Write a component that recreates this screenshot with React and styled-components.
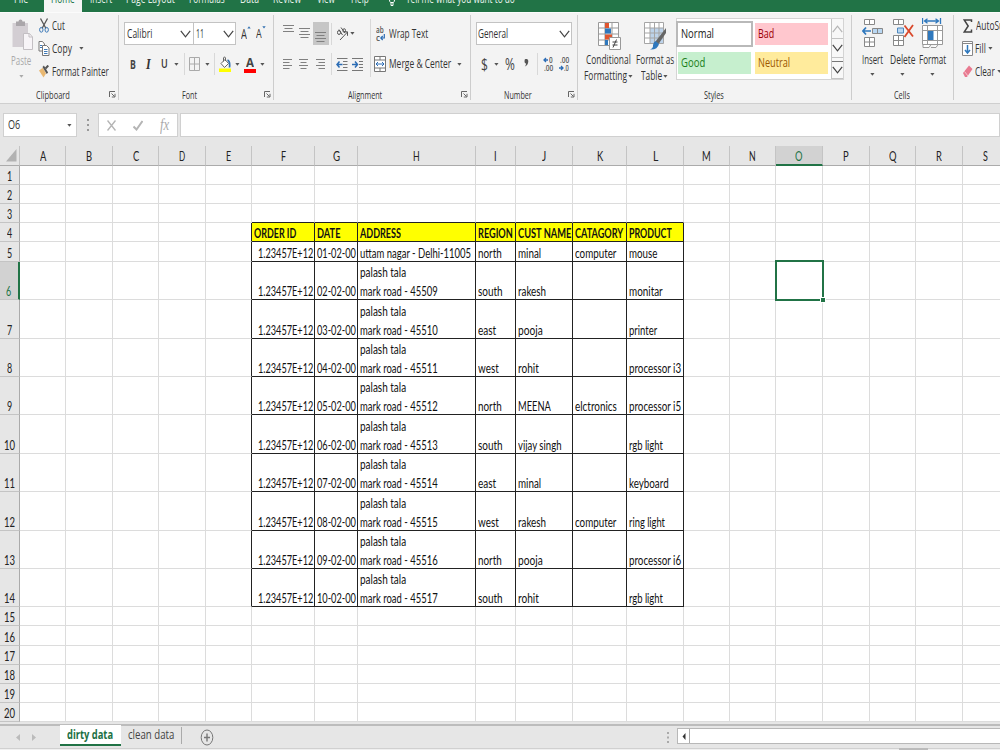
import { useLayoutEffect, useRef, useState } from "react"
import styled, { createGlobalStyle } from "styled-components"

const columns = [
    { name: "A", width: 46, letter: 6 },
    { name: "B", width: 47, letter: 6 },
    { name: "C", width: 46, letter: 6 },
    { name: "D", width: 47, letter: 6.5 },
    { name: "E", width: 46, letter: 5 },
    { name: "F", width: 63, letter: 5 },
    { name: "G", width: 43, letter: 7 },
    { name: "H", width: 118, letter: 7 },
    { name: "I", width: 40, letter: 3 },
    { name: "J", width: 57, letter: 4 },
    { name: "K", width: 54, letter: 6 },
    { name: "L", width: 57, letter: 5 },
    { name: "M", width: 46, letter: 9 },
    { name: "N", width: 46, letter: 7 },
    { name: "O", width: 47, letter: 7.5 },
    { name: "P", width: 47, letter: 6 },
    { name: "Q", width: 46, letter: 7.5 },
    { name: "R", width: 47, letter: 6 },
    { name: "S", width: 46, letter: 5 },
]

const rowHeights = [19, 19, 19, 19, 20, 38, 39, 38, 38, 39, 38, 39, 38, 38, 19, 20, 19, 19, 19, 19]

const fields = ["F", "G", "H", "I", "J", "K", "L"]

// every text is stored with the width it takes up in the sheet
const titles = [
    ["ORDER ID", 42],
    ["DATE", 23.5],
    ["ADDRESS", 41],
    ["REGION", 34.5],
    ["CUST NAME", 53.5],
    ["CATAGORY", 48.5],
    ["PRODUCT", 43],
]

const textWidths = {
    north: 23.5,
    south: 24.5,
    east: 18.5,
    west: 20.5,
    minal: 23.5,
    rakesh: 28,
    pooja: 25,
    rohit: 21,
    MEENA: 33,
    "vijay singh": 43.5,
    computer: 41.5,
    elctronics: 42,
    mouse: 28.5,
    monitar: 33.5,
    printer: 28.5,
    "processor i3": 52,
    "processor i5": 52,
    "processor i6": 52,
    "rgb light": 34,
    keyboard: 40,
    "ring light": 36,
}

const orders = [
    { date: "01-02-00", address: "uttam nagar - Delhi-11005", rest: ["north", "minal", "computer", "mouse"] },
    { date: "02-02-00", address: "mark road - 45509", rest: ["south", "rakesh", "", "monitar"] },
    { date: "03-02-00", address: "mark road - 45510", rest: ["east", "pooja", "", "printer"] },
    { date: "04-02-00", address: "mark road - 45511", rest: ["west", "rohit", "", "processor i3"] },
    { date: "05-02-00", address: "mark road - 45512", rest: ["north", "MEENA", "elctronics", "processor i5"] },
    { date: "06-02-00", address: "mark road - 45513", rest: ["south", "vijay singh", "", "rgb light"] },
    { date: "07-02-00", address: "mark road - 45514", rest: ["east", "minal", "", "keyboard"] },
    { date: "08-02-00", address: "mark road - 45515", rest: ["west", "rakesh", "computer", "ring light"] },
    { date: "09-02-00", address: "mark road - 45516", rest: ["north", "pooja", "", "processor i6"] },
    { date: "10-02-00", address: "mark road - 45517", rest: ["south", "rohit", "", "rgb light"] },
]

// condensed text: scales the words to the given width
function Text({ w, ml, children, className }) {
    const ref = useRef(null)
    const [scale, setScale] = useState(1)

    useLayoutEffect(() => {
        setScale(w / ref.current.offsetWidth)
    }, [w, children])

    return (
        <TextBox $w={w} $ml={ml} className={className}>
            <span ref={ref} style={{ transform: `scaleX(${scale})` }}>
                {children}
            </span>
        </TextBox>
    )
}

function Caret({ ml, mt, color = "#555" }) {
    return (
        <Icon $ml={ml} $mt={mt} width="5" height="3" viewBox="0 0 5 3">
            <path d="M0.3 0h4.2L2.4 2.8z" fill={color} />
        </Icon>
    )
}

function Chevron({ ml, color = "#444", w = 11 }) {
    return (
        <Icon $ml={ml} width={w} height="8" viewBox="0 0 11 8" fill="none" stroke={color} strokeWidth="1.2">
            <path d="M.8 .8l4.7 6 4.7-6" />
        </Icon>
    )
}

function Lines({ ml, mt = 0, rows, w = 11 }) {
    return (
        <Icon $ml={ml} $mt={mt} width={w} height={rows.length * 3} stroke="#808080" strokeWidth="1">
            {rows.map(([x1, x2], i) => (
                <path key={i} d={`M${x1} ${i * 3 + 0.5}H${x2}`} />
            ))}
        </Icon>
    )
}

function Launcher() {
    return (
        <LauncherIcon width="7" height="7" fill="none" stroke="#666">
            <path d="M.5 6V.5H6M2.5 2.5l3 3M6 2.8V6H2.8" />
        </LauncherIcon>
    )
}

function Clipboard() {
    return (
        <Group $w={119}>
            <Body>
                <Stack $w={36} $pl={11} $pt={6}>
                    <Icon width="22" height="32" viewBox="0 0 22 32">
                        <path d="M1.5 4H17v24H1.5z" fill="#d3ced3" />
                        <path d="M5 2.5h2.5a2 2 0 0 1 4 0H14V7H5z" fill="#aaa6aa" />
                        <path d="M12.5 14.5h6l3 3.5v12.5h-9z" fill="#f7f4f7" stroke="#c3bfc3" />
                        <path d="M18 14.5V18h3.5" fill="none" stroke="#c3bfc3" />
                    </Icon>
                    <PaleText w={20}>Paste</PaleText>
                    <Caret ml={8} mt={6} color="#aaa" />
                </Stack>
                <Stack $pt={1}>
                    <Tool $h={23}>
                        <Icon $ml={3} width="10" height="15" fill="none">
                            <path d="M1.5 .5L7 10.5M8.5 .5L3 10.5" stroke="#555" strokeWidth="1.3" />
                            <ellipse cx="2.3" cy="11.8" rx="1.7" ry="2.4" stroke="#3d7ab8" />
                            <ellipse cx="7.7" cy="11.8" rx="1.7" ry="2.4" stroke="#3d7ab8" />
                        </Icon>
                        <Text w={13} ml={3}>Cut</Text>
                    </Tool>
                    <Tool $h={23}>
                        <Icon $ml={2} width="12" height="15" stroke="#777" fill="#fff">
                            <path d="M1 .5h3.5L6.5 3v7H1z" />
                            <path d="M4.500 4.500h4L11 7v7.500H4.500z" />
                            <path d="M2 4.500h2M2 6.500h2M6 8.500h3.500M6 10.500h3.500M6 12.500h3.500" stroke="#3d7ab8" />
                        </Icon>
                        <Text w={20} ml={2}>Copy</Text>
                        <Caret ml={7} />
                    </Tool>
                    <Tool $h={23}>
                        <Icon $ml={3} width="11" height="13">
                            <path d="M0 5.500L3.800 2.800 7 8.500 4.500 12.500z" fill="#e9b872" />
                            <path d="M3.500 2l1.400-1.500 4.200 7L7.700 9z" fill="#555" />
                            <path d="M6.500 3.500L9.300 .5" stroke="#555" strokeWidth="2" />
                        </Icon>
                        <Text w={57} ml={2}>Format Painter</Text>
                    </Tool>
                </Stack>
            </Body>
            <Caption $pl={36}>
                <Text w={34}>Clipboard</Text>
                <Launcher />
            </Caption>
        </Group>
    )
}

function Font() {
    return (
        <Group $w={155}>
            <Stack $pt={9}>
                <Tool $h={23}>
                    <Select $ml={5} $w={70}>
                        <Text w={25} ml={2}>Calibri</Text>
                        <Chevron ml={28} />
                    </Select>
                    <Select $w={42} $joined>
                        <Text w={8} ml={2}>11</Text>
                        <Chevron ml={19} />
                    </Select>
                    <TallText w={6} ml={5}>A</TallText>
                    <Icon $mt={-12} width="4" height="3"><path d="M.3 2.500L2 .3l1.700 2.200z" fill="#3270b0" /></Icon>
                    <SmallText w={6} ml={5}>A</SmallText>
                    <Icon $mt={-12} width="4" height="3"><path d="M.3 .3L2 2.500 3.700 .3z" fill="#3270b0" /></Icon>
                </Tool>
                <Tool $h={22} $mt={8}>
                    <BoldText w={6} ml={10.5}>B</BoldText>
                    <ItalicText w={5} ml={10.5}>I</ItalicText>
                    <UnderText w={6.5} ml={10}>U</UnderText>
                    <Caret ml={6.5} />
                    <Rule $ml={5} />
                    <Icon $ml={4} width="11" height="14" fill="none" stroke="#aaa">
                        <path d="M.5 .5h10v13H.5zM5.500 .5v13M.5 7h10" />
                    </Icon>
                    <Caret ml={5} />
                    <Rule $ml={4} />
                    <Icon $ml={4} width="12" height="16" fill="none">
                        <path d="M2 7.500l4-4 3.500 4-4 4z" fill="#fff" stroke="#666" />
                        <path d="M4.500 5.500V2q1-2.500 2 0v3" stroke="#666" />
                        <path d="M8.500 4q2.800 1 2 7.500" stroke="#3270b0" strokeWidth="1.700" />
                        <path d="M0 12.500h12V16H0z" fill="#ff0" />
                    </Icon>
                    <Caret ml={4} />
                    <ColorLetter>
                        <BoldText w={8}>A</BoldText>
                    </ColorLetter>
                    <Caret ml={4} />
                </Tool>
            </Stack>
            <Caption $pl={63}>
                <Text w={15}>Font</Text>
                <Launcher />
            </Caption>
        </Group>
    )
}

function Alignment() {
    const left = [[0, 9], [0, 6.5], [0, 9], [0, 6.5]]
    const center = [[0, 9], [1.5, 7.5], [0, 9], [1.5, 7.5]]
    const right = [[0, 9], [2.5, 9], [0, 9], [2.5, 9]]
    const bars = [[0, 11], [1.5, 9.5], [0, 11]]

    return (
        <Group $w={197}>
            <Body>
                <TallStack>
                    <Tool $h={23}>
                        <Lines ml={9} mt={-9} rows={bars} />
                        <Lines ml={5} rows={[...bars, [1.5, 9.5]]} />
                        <Pressed>
                            <Lines mt={8} rows={[...bars, [1.5, 9.5]]} />
                        </Pressed>
                        <Rule $ml={2} />
                        <Icon $ml={4} width="13" height="14" fill="none" stroke="#555">
                            <path d="M4 13L11.500 5M8 4.800h3.500v4" />
                            <ellipse cx="3" cy="5.500" rx="1.500" ry="2" />
                            <path d="M3 2.500L6.500 8M5 .5L9 6" />
                            <ellipse cx="8.200" cy="3.500" rx="1.300" ry="1.800" />
                        </Icon>
                        <Caret ml={1} />
                    </Tool>
                    <Tool $h={22} $mt={8}>
                        <Lines ml={9} mt={2} rows={left} w={9} />
                        <Lines ml={7} mt={2} rows={center} w={9} />
                        <Lines ml={8} mt={2} rows={right} w={9} />
                        <Rule $ml={6} />
                        <Icon $ml={4} width="12" height="13" fill="none" stroke="#777">
                            <path d="M1 .5h10.500M7 3.500h4.500M7 6.500h4.500M7 9.500h4.500M1 12.500h10.500" />
                            <path d="M6.500 6.500H1M3.500 3.500l-2.500 3 2.500 3" stroke="#2b6cb5" strokeWidth="1.500" />
                        </Icon>
                        <Icon $ml={4} width="12" height="13" fill="none" stroke="#777">
                            <path d="M0 .5h11M7 3.500h4M7 6.500h4M7 9.500h4M0 12.500h11" />
                            <path d="M0 6.500h5.500M3 3.500l2.500 3-2.500 3" stroke="#2b6cb5" strokeWidth="1.500" />
                        </Icon>
                    </Tool>
                </TallStack>
                <Stack $pt={9}>
                    <Tool $h={23}>
                        <WrapIcon>
                            <TinyText w={8}>ab</TinyText>
                            <TinyText w={4}>c</TinyText>
                            <Icon width="5" height="7" fill="none" stroke="#2b6cb5" strokeWidth="1.200">
                                <path d="M4.300 0v4H1M2.700 2L.8 4l1.900 2" />
                            </Icon>
                        </WrapIcon>
                        <Text w={39} ml={2}>Wrap Text</Text>
                    </Tool>
                    <Tool $h={22} $mt={8}>
                        <Icon $ml={3} width="12" height="16" fill="#fff" stroke="#777">
                            <path d="M.5 .5h11v15H.5zM.5 4h11M.5 12h11M6 .5V4M6 12v3.500" />
                            <path d="M2 8h8M4 6L2 8l2 2M8 6l2 2-2 2" stroke="#2b6cb5" fill="none" />
                        </Icon>
                        <Text w={62} ml={2.5}>Merge &amp; Center</Text>
                        <Caret ml={6.5} />
                    </Tool>
                </Stack>
            </Body>
            <Caption $pl={74}>
                <Text w={34}>Alignment</Text>
                <Launcher />
            </Caption>
        </Group>
    )
}

function NumberGroup() {
    return (
        <Group $w={107}>
            <Stack $pt={9}>
                <Tool $h={23}>
                    <Select $ml={5} $w={96}>
                        <Text w={30} ml={1}>General</Text>
                        <Chevron ml={51} />
                    </Select>
                </Tool>
                <Tool $h={22} $mt={8}>
                    <LargeText w={7} ml={10}>$</LargeText>
                    <Caret ml={6} />
                    <LargeText w={10} ml={5.5}>%</LargeText>
                    <Icon $ml={9} $mt={-2} width="5" height="9">
                        <path d="M1.500 0h1.300q1.700 0 1.500 2.500Q4 6.500 .8 7.500q1.400-1.700 1.200-3Q.5 4.500 .5 2.300 .5 0 1.500 0z" fill="#555" />
                    </Icon>
                    <Rule $ml={8} />
                    <Decimals>
                        <Tool>
                            <Icon width="5" height="6" fill="none" stroke="#2b6cb5" strokeWidth="1.300"><path d="M5 3H1M3 1L1 3l2 2" /></Icon>
                            <TinyText w={4} ml={1}>0</TinyText>
                        </Tool>
                        <Tool><TinyText w={9} ml={1}>.00</TinyText></Tool>
                    </Decimals>
                    <Decimals>
                        <Tool><TinyText w={9} ml={1}>.00</TinyText></Tool>
                        <Tool>
                            <Icon width="5" height="6" fill="none" stroke="#2b6cb5" strokeWidth="1.300"><path d="M0 3h4M2 1l2 2-2 2" /></Icon>
                            <TinyText w={5}>.0</TinyText>
                        </Tool>
                    </Decimals>
                </Tool>
            </Stack>
            <Caption $pl={33}>
                <Text w={28}>Number</Text>
                <Launcher />
            </Caption>
        </Group>
    )
}

function Styles() {
    return (
        <Group $w={274}>
            <Body>
                <Stack $w={57} $pt={9} $pl={6}>
                    <Icon $ml={14} width="23" height="28">
                        <path d="M.5 .5h20v23H.5zM7 .5v23M14 .5v23M.5 6h20M.5 12h20M.5 18h20" fill="#fff" stroke="#999" />
                        <path d="M7 1h4v5H7zM7 12.500h7v5H7z" fill="#e0562f" />
                        <path d="M7 6.500h6v5H7zM7 18h3v5H7z" fill="#2f78bd" />
                        <path d="M11.500 15.500h11v12h-11z" fill="#fff" stroke="#999" />
                        <path d="M14.500 20h5M14.500 23h5M18.500 17.500l-3.500 8" stroke="#444" />
                    </Icon>
                    <BigLabel w={45} ml={2}>Conditional</BigLabel>
                    <Tool>
                        <Text w={43}>Formatting</Text>
                        <Caret ml={1} />
                    </Tool>
                </Stack>
                <Stack $w={41} $pt={9}>
                    <Icon $ml={9} width="23" height="28">
                        <path d="M.5 .5h19v21H.5z" fill="#fff" />
                        <path d="M6 6h14v15.500H6z" fill="#bdd3ea" />
                        <path d="M.5 .5h19v21H.5zM6 .5v21M10.500 .5v21M15 .5v21M.5 6h19M.5 11h19M.5 16h19" fill="none" stroke="#a5a5a5" />
                        <path d="M22 6v5l-7.500 11-3-2.500z" fill="#666" />
                        <path d="M11.500 19l3.500 3q-1.500 6-9 5.500 3.500-1.500 3-4.500 .5-3 2.500-4z" fill="#2f78bd" />
                    </Icon>
                    <BigLabel w={38} ml={0.5}>Format as</BigLabel>
                    <Tool>
                        <Text w={21} ml={6}>Table</Text>
                        <Caret ml={1} />
                    </Tool>
                </Stack>
                <Gallery>
                    <Swatches>
                        <Swatch $active><Text w={33} ml={3}>Normal</Text></Swatch>
                        <Swatch $bg="#ffc7ce" $color="#9c0006"><Text w={16} ml={3}>Bad</Text></Swatch>
                        <Swatch $bg="#c6efce" $color="#1a7f1a"><Text w={24} ml={3}>Good</Text></Swatch>
                        <Swatch $bg="#ffeb9c" $color="#9c5700"><Text w={32} ml={3}>Neutral</Text></Swatch>
                    </Swatches>
                    <Scroller>
                        <ScrollButton $flip><Chevron color="#b5b5b5" /></ScrollButton>
                        <ScrollButton><Chevron /></ScrollButton>
                        <ScrollButton $more><Chevron /></ScrollButton>
                    </Scroller>
                </Gallery>
            </Body>
            <Caption $pl={126}>
                <Text w={20}>Styles</Text>
            </Caption>
        </Group>
    )
}

function Cells() {
    return (
        <Group $w={102}>
            <Body>
                <Stack $w={38} $pt={6} $pl={10}>
                    <Icon width="22" height="31" fill="#fff" stroke="#888">
                        <path d="M2.500 .5h10v5h-10zM7.500 .5v5M2.500 18.500h10v9h-10zM7.500 18.500v9M2.500 23h10" />
                        <path d="M10.500 9.500h10v5h-10zM15.500 9.500v5" fill="#b9d7f2" />
                        <path d="M9 12H1M4 8.500L1 12l3 3.500" fill="none" stroke="#2f78bd" strokeWidth="1.700" />
                    </Icon>
                    <BigLabel w={21}>Insert</BigLabel>
                    <Caret ml={8} mt={5} />
                </Stack>
                <Stack $w={28} $pt={6}>
                    <Icon $ml={3} width="22" height="31" fill="#fff" stroke="#888">
                        <path d="M.5 .5h10v5H.5zM5.500 .5v5M.5 16.500h10v10H.5zM5.500 16.500v10M.5 21.500h10" />
                        <path d="M4.500 9h6v5h-6z" fill="#b9d7f2" stroke="#4d87bd" />
                        <path d="M11.500 6.500l8.500 11M20 6L11.500 18" stroke="#d9482b" strokeWidth="1.800" />
                    </Icon>
                    <BigLabel w={25.5}>Delete</BigLabel>
                    <Caret ml={10} mt={5} />
                </Stack>
                <Stack $pt={5}>
                    <Icon $ml={4} width="22" height="32" fill="#fff" stroke="#999">
                        <path d="M.5 7.500h20v19H.5zM5.500 7.500v19M15.500 7.500v19M.5 12.500h20M.5 22.500h20M1 26.500v3h6l2-3M9 29.500h5l2-3" />
                        <path d="M6 13h5.500v9H6z" fill="#2f78bd" stroke="none" />
                        <path d="M3 3h12.500M5.500 .8L2.500 3l3 2.200M13.500 .8l3 2.200-3 2.200M.5 0v6M18.500 0v6" fill="none" stroke="#2f78bd" strokeWidth="1.300" />
                    </Icon>
                    <BigLabel w={27} ml={1}>Format</BigLabel>
                    <Caret ml={12} mt={5} />
                </Stack>
            </Body>
            <Caption $pl={42}>
                <Text w={16}>Cells</Text>
            </Caption>
        </Group>
    )
}

function Editing() {
    return (
        <Group $w={60}>
            <Stack $pt={1}>
                <Tool $h={23}>
                    <Icon $ml={9} width="10" height="14" fill="none" stroke="#444" strokeWidth="1.500">
                        <path d="M8.500 3V1H1.200l4 6-4 6h7.300v-2.500" />
                    </Icon>
                    <Text w={36} ml={2.5}>AutoSum</Text>
                </Tool>
                <Tool $h={23}>
                    <Icon $ml={8} width="11" height="15" fill="#fff" stroke="#888">
                        <path d="M.5 .5h10v14H.5zM.5 2.500h10" />
                        <path d="M5.500 4v8M3 9l2.500 3L8 9" fill="none" stroke="#2f78bd" strokeWidth="1.500" />
                    </Icon>
                    <Text w={11} ml={2}>Fill</Text>
                    <Caret ml={2} />
                </Tool>
                <Tool $h={23}>
                    <Icon $ml={9} width="10" height="13">
                        <path d="M0 8L6 .5 9.500 4 4 12H2z" fill="#e87a90" />
                        <path d="M1.500 6.500L5 11" stroke="#f7c6d0" />
                    </Icon>
                    <Text w={20} ml={2}>Clear</Text>
                    <Caret ml={2} />
                </Tool>
            </Stack>
        </Group>
    )
}

function FormulaBar() {
    return (
        <FormulaRow>
            <Field $w={74}>
                <Text w={12.5} ml={3.5}>O6</Text>
                <Caret ml={47} />
            </Field>
            <Dots width="3" height="12" fill="#999" $ml={10} $mr={8}>
                <path d="M0 0h2v2H0zM0 5h2v2H0zM0 10h2v2H0z" />
            </Dots>
            <Field $w={80}>
                <Icon $ml={8} width="9" height="11" fill="none" stroke="#b5b5b5" strokeWidth="1.400">
                    <path d="M.5 .5l8 10M8.500 .5l-8 10" />
                </Icon>
                <Icon $ml={17} width="10" height="11" fill="none" stroke="#b5b5b5" strokeWidth="2">
                    <path d="M.5 6.500l3 3L9.500 1" />
                </Icon>
                <Fx w={9} ml={17}>fx</Fx>
            </Field>
            <Field $grow />
        </FormulaRow>
    )
}

function cellContent(row, name) {
    const i = fields.indexOf(name)
    if (i < 0 || row < 4 || row > 14) return null
    if (row === 4) return <BoldCell w={titles[i][1]}>{titles[i][0]}</BoldCell>

    const order = orders[row - 5]
    if (i === 0) return <Text w={55}>1.23457E+12</Text>
    if (i === 1) return <Text w={39}>{order.date}</Text>
    if (i === 2) {
        return (
            <>
                {row > 5 && <Text w={46}>palash tala</Text>}
                <Text w={row > 5 ? 78 : 111}>{order.address}</Text>
            </>
        )
    }
    const value = order.rest[i - 3]
    return value ? <Text w={textWidths[value]}>{value}</Text> : null
}

function Sheet() {
    return (
        <Grid>
            <Corner>
                <Icon width="11" height="13"><path d="M10.500 0v12.500H0z" fill="#b2b2b2" /></Icon>
            </Corner>
            {columns.map(({ name, letter }) => (
                <ColumnHead key={name} $active={name === "O"}>
                    <Text w={letter}>{name}</Text>
                </ColumnHead>
            ))}
            {rowHeights.map((_, i) => {
                const row = i + 1
                return [
                    <RowHead key={row} $active={row === 6}>
                        <Text w={row > 9 ? 11 : 5.5}>{row}</Text>
                    </RowHead>,
                    ...columns.map(({ name }) => {
                        const inTable = fields.includes(name)
                        const tableRow = row > 3 && row < 15
                        return (
                            <Cell
                                key={name + row}
                                $title={inTable && row === 4}
                                $right={row > 4 && (name === "F" || name === "G")}
                                $lineRight={tableRow && (inTable || name === "E")}
                                $lineBottom={inTable && row > 2 && row < 15}
                            >
                                {cellContent(row, name)}
                                {name === "O" && row === 6 && <Selection />}
                            </Cell>
                        )
                    }),
                ]
            })}
        </Grid>
    )
}

function SheetTabs() {
    return (
        <BottomBar>
            <Icon $ml={16} width="4" height="7"><path d="M4 0v7L0 3.500z" fill="#bbb" /></Icon>
            <Icon $ml={12} width="4" height="7"><path d="M0 0v7l4-3.500z" fill="#bbb" /></Icon>
            <ActiveTab>
                <BoldCell w={46}>dirty data</BoldCell>
            </ActiveTab>
            <SheetTab>
                <Text w={46}>clean data</Text>
            </SheetTab>
            <Icon $ml={18} width="14" height="17" fill="none" stroke="#777">
                <ellipse cx="7" cy="8.500" rx="5.800" ry="7.500" />
                <path d="M7 4.500v8M4 8.500h6" strokeWidth="1.400" />
            </Icon>
            <Dots width="3" height="11" fill="#aaa" $ml={453} $mr={7}>
                <path d="M0 0h2v2H0zM0 4.500h2v2H0zM0 9h2v2H0z" />
            </Dots>
            <ScrollTrack>
                <ScrollStart>
                    <Icon width="4" height="7"><path d="M3.500 0v7L.5 3.500z" fill="#333" /></Icon>
                </ScrollStart>
            </ScrollTrack>
        </BottomBar>
    )
}

export default function App() {
    return (
        <Window>
            <GlobalStyle />
            <Tabs>
                <Text w={14} ml={14}>File</Text>
                <HomeTab><Text w={24}>Home</Text></HomeTab>
                <Text w={22} ml={8}>Insert</Text>
                <Text w={49} ml={14}>Page Layout</Text>
                <Text w={36} ml={14}>Formulas</Text>
                <Text w={19} ml={15}>Data</Text>
                <Text w={28} ml={14}>Review</Text>
                <Text w={18} ml={16}>View</Text>
                <Text w={18} ml={16}>Help</Text>
                <Bulb width="6" height="6" fill="none" stroke="#fff">
                    <path d="M.5 0q0 1.500 1 2.500h3q1-1 1-2.500M2 3v2.500h2V3" />
                </Bulb>
                <Text w={109} ml={11}>Tell me what you want to do</Text>
            </Tabs>
            <Ribbon>
                <Clipboard />
                <Font />
                <Alignment />
                <NumberGroup />
                <Styles />
                <Cells />
                <Editing />
            </Ribbon>
            <FormulaBar />
            <Sheet />
            <SheetTabs />
            <Footer><FooterThumb /></Footer>
        </Window>
    )
}

const GlobalStyle = createGlobalStyle`
    * {
        box-sizing: border-box;
    }
    body {
        margin: 0;
        overflow: hidden;
    }
`

const Window = styled.div`
    width: 1000px;
    height: 750px;
    display: flex;
    flex-direction: column;
    overflow: hidden;
    background-color: #e6e6e6;
    font-family: "Open Sans", "Noto Sans", sans-serif;
    font-size: 12.3px;
    line-height: 16px;
    color: #333;
`

const TextBox = styled.div`
    flex: none;
    width: ${({ $w }) => $w}px;
    margin-left: ${({ $ml }) => $ml || 0}px;
    white-space: nowrap;
    span {
        display: inline-block;
        transform-origin: left;
    }
`

const PaleText = styled(Text)`
    margin-top: 2px;
    color: #aaa;
`

const BigLabel = styled(Text)`
    padding-top: 2px;
`

const BoldText = styled(Text)`
    font-size: 13px;
    font-weight: 700;
    color: #444;
`

const BoldCell = styled(Text)`
    font-weight: 700;
`

const ItalicText = styled(Text)`
    font-family: "Liberation Serif", serif;
    font-style: italic;
    font-weight: 700;
    font-size: 14.5px;
`

const UnderText = styled(Text)`
    font-size: 12.5px;
    font-weight: 600;
    text-decoration: underline;
`

const TallText = styled(Text)`
    font-size: 14px;
`

const SmallText = styled(Text)`
    font-size: 12px;
`

const LargeText = styled(Text)`
    font-size: 15.5px;
    color: #444;
`

const TinyText = styled(Text)`
    font-size: 8px;
    line-height: 8px;
    font-weight: 600;
    color: #555;
`

const Fx = styled(Text)`
    font-family: "Liberation Serif", serif;
    font-style: italic;
    font-size: 17px;
    color: #aaa;
`

const Icon = styled.svg`
    flex: none;
    display: block;
    margin-left: ${({ $ml }) => $ml || 0}px;
    margin-top: ${({ $mt }) => $mt || 0}px;
`

const Bulb = styled.svg`
    flex: none;
    margin-left: 20px;
`

const LauncherIcon = styled.svg`
    margin: 0 2px 0 auto;
`

const Dots = styled.svg`
    flex: none;
    margin-left: ${({ $ml }) => $ml}px;
    margin-right: ${({ $mr }) => $mr}px;
`

const Tabs = styled.nav`
    flex: none;
    height: 12px;
    display: flex;
    align-items: flex-start;
    overflow: hidden;
    background-color: #217346;
    color: #e8f2ec;
    line-height: 14px;
    ${TextBox} {
        margin-top: -8px;
    }
`

const HomeTab = styled.div`
    width: 38px;
    height: 12px;
    margin-left: 16px;
    padding-left: 7px;
    background-color: #f5f5f5;
    color: #217346;
`

const Ribbon = styled.div`
    flex: none;
    height: 92px;
    display: flex;
    overflow: hidden;
    background-color: #f3f3f3;
    border-top: 1px solid #fbfbfb;
    border-bottom: 1px solid #cfcfcf;
`

const Group = styled.section`
    flex: none;
    width: ${({ $w }) => $w}px;
    height: 90px;
    display: flex;
    flex-direction: column;
    justify-content: space-between;
    padding-bottom: 1px;
    border-right: 1px solid;
    border-image: linear-gradient(transparent 3px, #cdcdcd 3px, #cdcdcd 86px, transparent 86px) 1;
`

const Body = styled.div`
    display: flex;
    height: 74px;
`

const Stack = styled.div`
    flex: none;
    height: 74px;
    width: ${({ $w }) => ($w ? $w + "px" : "auto")};
    padding-top: ${({ $pt }) => $pt || 0}px;
    padding-left: ${({ $pl }) => $pl || 0}px;
`

const TallStack = styled(Stack)`
    width: 97px;
    padding-top: 9px;
    border-right: 1px solid;
    border-image: linear-gradient(transparent 7px, #d8d8d8 7px, #d8d8d8 63px, transparent 63px) 1;
`

const Tool = styled.div`
    display: flex;
    align-items: center;
    height: ${({ $h }) => ($h ? $h + "px" : "auto")};
    margin-top: ${({ $mt }) => $mt || 0}px;
`

const Caption = styled.div`
    display: flex;
    align-items: center;
    height: 15px;
    padding-left: ${({ $pl }) => $pl}px;
    font-size: 11px;
`

const Rule = styled.div`
    width: 1px;
    height: 22px;
    margin-left: ${({ $ml }) => $ml}px;
    background-color: #d8d8d8;
`

const Select = styled.div`
    display: flex;
    align-items: center;
    width: ${({ $w }) => $w}px;
    height: 23px;
    margin-left: ${({ $ml }) => $ml || 0}px;
    border: 1px solid #c3c3c3;
    border-left-width: ${({ $joined }) => ($joined ? 0 : 1)}px;
    background-color: #fff;
`

const Pressed = styled.div`
    width: 16px;
    height: 23px;
    margin-left: 3px;
    padding: 2px;
    background-color: #c6c6c6;
`

const ColorLetter = styled.div`
    width: 12px;
    height: 17px;
    margin-left: 4px;
    padding-left: 2px;
    border-bottom: 4px solid #f00;
    line-height: 12px;
`

const WrapIcon = styled.div`
    display: flex;
    flex-wrap: wrap;
    width: 12px;
    margin-left: 4px;
    padding-left: 1px;
`

const Decimals = styled.div`
    width: 11px;
    margin-left: 5px;
`

const Gallery = styled.div`
    display: flex;
    width: 168px;
    height: 62px;
    margin-top: 5px;
    background-color: #fff;
    border: 1px solid #d4d4d4;
`

const Swatches = styled.div`
    display: grid;
    grid-template-columns: 73px 73px;
    gap: 7px 4px;
    padding: 4px 3px 0 1px;
    align-content: start;
`

const Swatch = styled.div`
    display: flex;
    align-items: center;
    height: 22px;
    background-color: ${({ $bg }) => $bg || "#fff"};
    color: ${({ $color }) => $color || "#222"};
    outline: ${({ $active }) => ($active ? "2px solid #b9b9b9" : "none")};
`

const Scroller = styled.div`
    width: 13px;
    display: grid;
    grid-template-rows: 20px 19px 21px;
`

const ScrollButton = styled.div`
    display: flex;
    align-items: center;
    justify-content: center;
    border: 1px solid #c4c4c4;
    border-width: 0 0 1px 1px;
    background-color: #f8f8f8;
    box-shadow: ${({ $more }) => ($more ? "inset 0 3px #f8f8f8, inset 0 4px #777" : "none")};
    padding-top: ${({ $more }) => ($more ? 4 : 0)}px;
    svg {
        transform: ${({ $flip }) => ($flip ? "scaleY(-1)" : "none")};
    }
`

const FormulaRow = styled.div`
    flex: none;
    display: flex;
    align-items: center;
    height: 42px;
    padding-left: 3px;
`

const Field = styled.div`
    display: flex;
    align-items: center;
    flex: ${({ $grow }) => ($grow ? 1 : "none")};
    width: ${({ $w }) => $w}px;
    height: 24px;
    margin-left: ${({ $grow }) => ($grow ? 2 : 0)}px;
    background-color: #fff;
    border: 1px solid #d0d0d0;
`

const Grid = styled.div`
    flex: none;
    display: grid;
    width: 1010px;
    height: 578px;
    overflow: hidden;
    grid-template-columns: 20px ${columns.map(({ width }) => width + "px").join(" ")};
    grid-template-rows: 20px ${rowHeights.map((h) => h + "px").join(" ")} 2px;
    font-family: Lato, sans-serif;
    font-size: 13px;
    line-height: 19px;
    color: #111;
`

const Corner = styled.div`
    display: flex;
    align-items: center;
    justify-content: flex-end;
    padding-right: 2px;
    border-right: 1px solid #c4c4c4;
    border-bottom: 1px solid #ababab;
`

const ColumnHead = styled.div`
    display: flex;
    justify-content: center;
    line-height: 22px;
    font-size: 12.5px;
    border-right: 1px solid #c4c4c4;
    border-bottom: ${({ $active }) => ($active ? "2px solid #217346" : "1px solid #ababab")};
    background-color: ${({ $active }) => ($active ? "#d2d2d2" : "#e6e6e6")};
    color: ${({ $active }) => ($active ? "#217346" : "#222")};
`

const RowHead = styled.div`
    display: flex;
    align-items: flex-end;
    justify-content: center;
    border-right: ${({ $active }) => ($active ? "2px solid #217346" : "1px solid #ababab")};
    border-bottom: 1px solid #c4c4c4;
    background-color: ${({ $active }) => ($active ? "#d2d2d2" : "#e6e6e6")};
    color: ${({ $active }) => ($active ? "#217346" : "#222")};
    ${TextBox} {
        margin-bottom: -2px;
    }
`

const Cell = styled.div`
    position: relative;
    display: flex;
    flex-direction: column;
    justify-content: flex-end;
    align-items: ${({ $right }) => ($right ? "flex-end" : "flex-start")};
    padding: 0 1.5px;
    background-color: ${({ $title }) => ($title ? "#ff0" : "#fff")};
    border-right: 1px solid ${({ $lineRight }) => ($lineRight ? "#222" : "#dcdcdc")};
    border-bottom: 1px solid ${({ $lineBottom }) => ($lineBottom ? "#222" : "#dcdcdc")};
    ${TextBox}:last-child {
        margin-bottom: -2px;
    }
`

const Selection = styled.div`
    position: absolute;
    inset: -2px -2px -2px -1px;
    border: 2px solid #217346;
    z-index: 1;
    &::after {
        content: "";
        position: absolute;
        right: -3px;
        bottom: -3px;
        width: 4px;
        height: 4px;
        background-color: #217346;
        outline: 1px solid #fff;
    }
`

const BottomBar = styled.div`
    flex: none;
    display: flex;
    align-items: center;
    height: 24px;
    border-top: 2px solid #bcbcbc;
    background-color: #e6e6e6;
    font-size: 12.8px;
`

const ActiveTab = styled.div`
    align-self: flex-start;
    width: 61px;
    height: 21px;
    margin: -1px 0 0 24px;
    padding: 1px 7px 0;
    background-color: #fff;
    border-bottom: 2px solid #217346;
    color: #1c7044;
`

const SheetTab = styled.div`
    align-self: flex-start;
    width: 61px;
    height: 17px;
    margin-top: 1px;
    padding-left: 7px;
    border-right: 1px solid #aaa;
    color: #444;
    line-height: 14px;
`

const ScrollTrack = styled.div`
    flex: 1;
    height: 16px;
    margin-top: -2px;
    background-color: #fff;
    border: 1px solid #b8b8b8;
    border-right: none;
`

const ScrollStart = styled.div`
    display: flex;
    align-items: center;
    justify-content: center;
    width: 12px;
    height: 14px;
    border-right: 1px solid #aaa;
`

const Footer = styled.div`
    flex: none;
    height: 2px;
    background-color: #f0f0f0;
    border-top: 1px solid #d0d0d0;
`

const FooterThumb = styled.div`
    width: 29px;
    height: 2px;
    margin: -1px 0 0 899px;
    background-color: #bbb;
`
